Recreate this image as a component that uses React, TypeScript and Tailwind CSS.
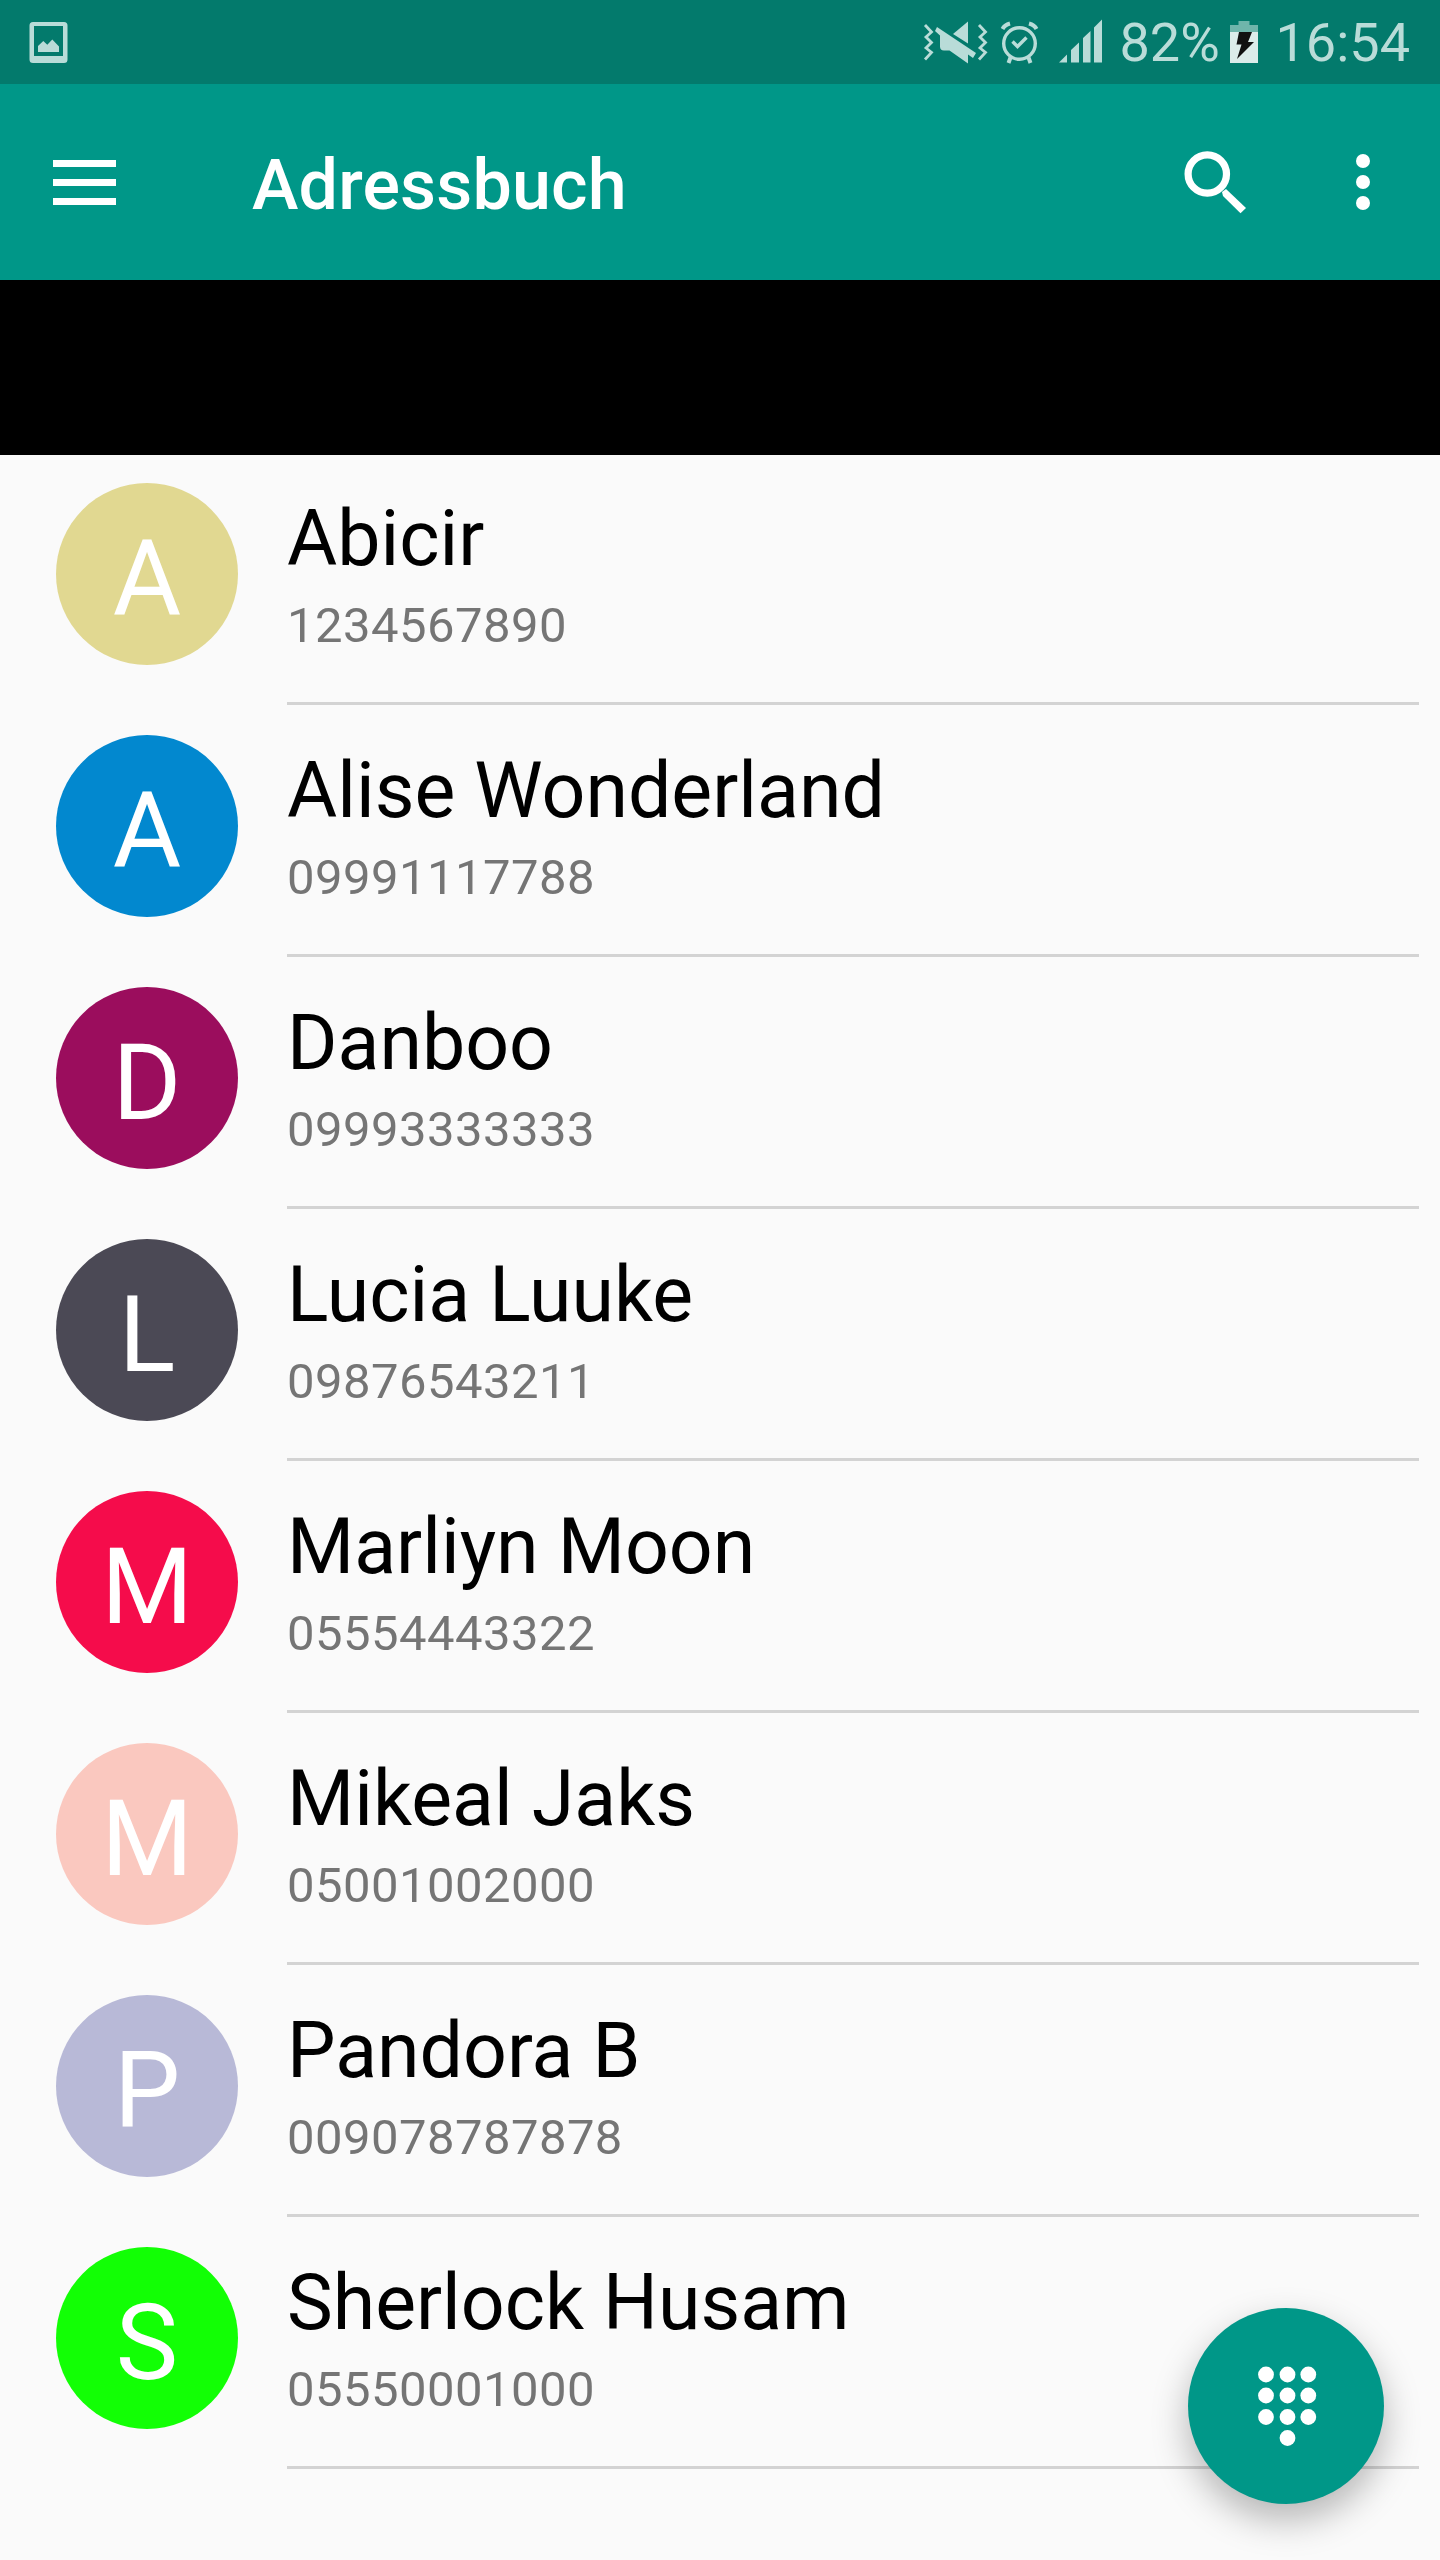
interface IContact {
  name: string;
  phone: string;
  color: string;
}

const contacts: IContact[] = [
  { name: "Abicir", phone: "1234567890", color: "bg-[#e1d891]" },
  { name: "Alise Wonderland", phone: "09991117788", color: "bg-[#0288cf]" },
  { name: "Danboo", phone: "09993333333", color: "bg-[#9b0d5d]" },
  { name: "Lucia Luuke", phone: "09876543211", color: "bg-[#4b4955]" },
  { name: "Marliyn Moon", phone: "05554443322", color: "bg-[#f50c4b]" },
  { name: "Mikeal Jaks", phone: "05001002000", color: "bg-[#fac8bf]" },
  { name: "Pandora B", phone: "009078787878", color: "bg-[#b8b9d7]" },
  { name: "Sherlock Husam", phone: "05550001000", color: "bg-[#12ff05]" },
];

function StatusBar() {
  return (
    <div className="flex h-[84px] items-center bg-[#037a6c] text-[#b9dcd8]">
      <svg className="ml-[29px] h-[84px] w-10" viewBox="29 0 40 84" fill="currentColor">
        <path
          fillRule="evenodd"
          d="M33 22h31a3.5 3.5 0 0 1 3.5 3.5v34a3.5 3.5 0 0 1-3.5 3.5H33a3.5 3.5 0 0 1-3.5-3.5v-34A3.5 3.5 0 0 1 33 22ZM34 26v30h29V26Z"
        />
        <path d="M38 52v-6l5.3-5 4 3.7 5-5.2 6.7 7V52Z" />
      </svg>
      <svg className="ml-auto h-[84px] w-[190px]" viewBox="920 0 190 84" fill="currentColor">
        {/* muted speaker with vibration marks */}
        <g fill="none" stroke="currentColor" strokeWidth="2.8">
          <path d="M925 25l6.5 7-5.5 5 5.5 5.5-5.5 5.5 5.5 4.500-6.5 7" />
          <path d="M979 25l6.5 7-5.5 5 5.5 5.5-5.5 5.5 5.5 4.500-6.5 7" />
        </g>
        <path d="M968 21.5V43.5L953 34Z" />
        <path d="M937 27l39 26-3 5-5-3.5V63.5L949.5 50.5H944a4 4 0 0 1-4-4V35.5L935 31Z" />
        {/* alarm clock */}
        <g fill="none" stroke="currentColor" strokeWidth="3.4">
          <circle cx="1019.5" cy="43.5" r="15.8" />
          <path d="M1012.5 41.5l5 5 9-9" />
          <path d="M1002.5 29q2-4 7.5-5.5M1036.5 29q-2-4-7.5-5.5" strokeWidth="4" />
          <path d="M1010.5 57.5l-2 5.5M1028.5 57.5l2 5.5" strokeWidth="4" />
        </g>
        {/* signal strength */}
        <path d="M1059 62.5l8-8v8ZM1071 62.5V50l8-7.5v20ZM1083 62.5V38l7.5-7v31.5ZM1094 62.5V27.5l8-8v43Z" />
      </svg>
      <span className="ml-[10px] w-[98px] pt-[2px] text-[54px] leading-none whitespace-nowrap">82%</span>
      <svg className="ml-[12px] h-[84px] w-7" viewBox="1230 0 28 84">
        <path fill="#6fb5ab" d="M1230 25h8.5v-4h11v4h8.5v7h-28Z" />
        <path fill="#dcecea" d="M1230 32h28v31h-28Z" />
        <path fill="#111" d="M1239 32h13l-4 10h6l-17 17 4.5-14.5h-5Z" />
      </svg>
      <span className="mr-[30px] ml-[18px] pt-[2px] text-[54px] leading-none">16:54</span>
    </div>
  );
}

function AppBar() {
  return (
    <header className="flex h-[196px] items-center bg-[#009788] text-white">
      <svg className="ml-[53px] h-[45px] w-[63px]" viewBox="0 0 63 45" fill="currentColor">
        <path d="M0 0h63v7H0ZM0 19h63v7H0ZM0 38h63v7H0Z" />
      </svg>
      <h1 className="ml-[136px] pt-[6px] text-[70px] leading-none font-medium tracking-[0.15px]">
        Adressbuch
      </h1>
      <svg className="ml-auto h-[63px] w-[63px]" viewBox="1184 150 63 63">
        <circle cx="1207.3" cy="173" r="19.2" fill="none" stroke="currentColor" strokeWidth="7.2" />
        <path fill="currentColor" d="M1222 191l4-3 20 19-5.5 5.2L1223 195Z" />
      </svg>
      <svg className="mr-[70px] ml-[109px] h-[56px] w-[14px]" viewBox="0 0 14 56" fill="currentColor">
        <circle cx="7" cy="7" r="7" />
        <circle cx="7" cy="28" r="7" />
        <circle cx="7" cy="49" r="7" />
      </svg>
    </header>
  );
}

function ContactRow({ name, phone, color }: IContact) {
  return (
    <li className="flex h-[252px] pl-14">
      <div
        className={`mt-[30px] flex h-[182px] w-[182px] items-center justify-center rounded-full pt-[10px] text-[105px] leading-none text-white ${color}`}
      >
        {name[0]}
      </div>
      <div className="mr-[21px] ml-[49px] flex-1 border-b-[3px] border-[#d3d3d3] pt-[41px]">
        <p className="text-[77px] leading-[90px] text-black">{name}</p>
        <p className="mt-[13px] text-[49px] leading-[57px] tracking-[0.45px] text-[#757575]">{phone}</p>
      </div>
    </li>
  );
}

function DialButton() {
  const columns = [78, 99.5, 120.3];
  const rows = [66.5, 87.5, 109];

  return (
    <button className="absolute right-[56px] bottom-[56px] h-[196px] w-[196px] rounded-full bg-[#009788] shadow-[0_16px_36px_rgba(0,0,0,0.28)]">
      <svg className="h-full w-full" viewBox="0 0 196 196" fill="#fff">
        {rows.map((y) => columns.map((x) => <circle key={`${x}-${y}`} cx={x} cy={y} r="7.9" />))}
        <circle cx="99.5" cy="130" r="7.9" />
      </svg>
    </button>
  );
}

export default function App() {
  return (
    <div className="relative h-[2560px] w-[1440px] overflow-hidden bg-[#fafafa] font-['Roboto',sans-serif]">
      <StatusBar />
      <AppBar />
      <div className="h-[175px] bg-black" />
      <ul className="-mt-[2px]">
        {contacts.map((contact) => (
          <ContactRow key={contact.name} {...contact} />
        ))}
      </ul>
      <DialButton />
    </div>
  );
}
